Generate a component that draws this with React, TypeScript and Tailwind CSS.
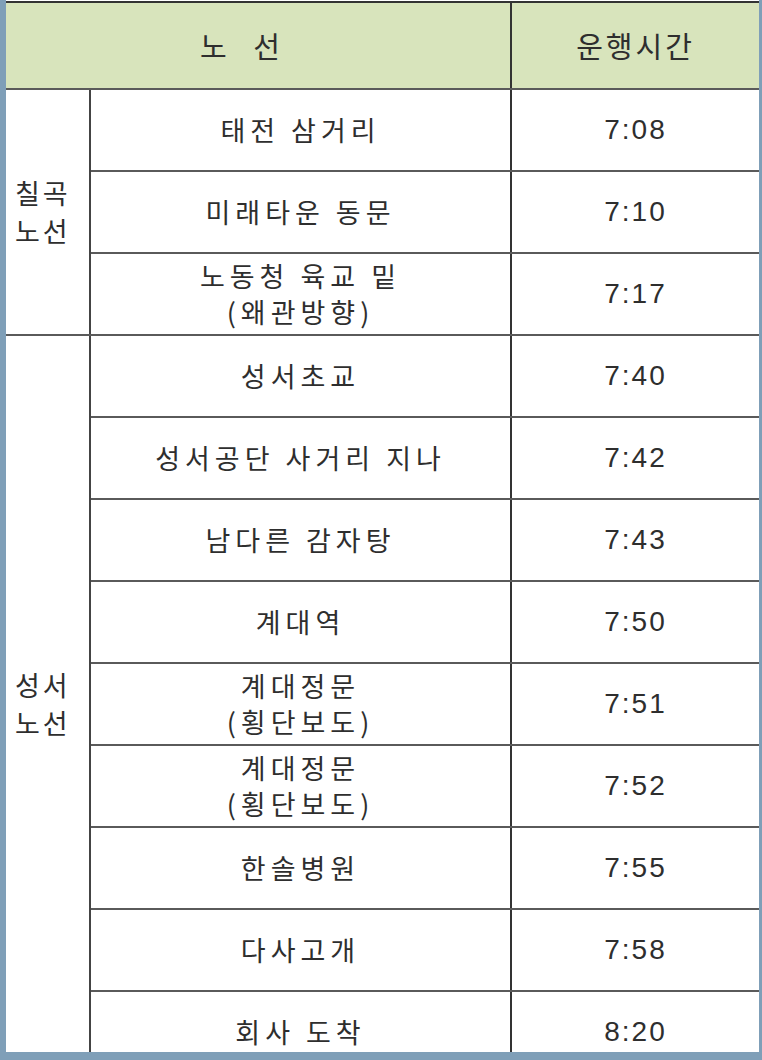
const ko = { fontFamily: '"Noto Sans CJK KR", "Noto Sans", sans-serif' };
const num = { fontFamily: '"Liberation Sans", Arial, sans-serif' };

type Stop = { name: string[]; time: string };

const chilgok: Stop[] = [
  { name: ["태전 삼거리"], time: "7:08" },
  { name: ["미래타운 동문"], time: "7:10" },
  { name: ["노동청 육교 밑", "(왜관방향)"], time: "7:17" },
];

const seongseo: Stop[] = [
  { name: ["성서초교"], time: "7:40" },
  { name: ["성서공단 사거리 지나"], time: "7:42" },
  { name: ["남다른 감자탕"], time: "7:43" },
  { name: ["계대역"], time: "7:50" },
  { name: ["계대정문", "(횡단보도)"], time: "7:51" },
  { name: ["계대정문", "(횡단보도)"], time: "7:52" },
  { name: ["한솔병원"], time: "7:55" },
  { name: ["다사고개"], time: "7:58" },
  { name: ["회사 도착"], time: "8:20" },
];

function Group({ label, stops }: { label: string[]; stops: Stop[] }) {
  return (
    <>
      {stops.map((s, i) => (
        <tr key={i} className="h-[82px]">
          {i === 0 && (
            <td
              rowSpan={stops.length}
              className="border-y-2 border-r-2 border-y-[#5a5a5a] border-r-[#444] pl-[9px] text-left align-middle text-[27px] leading-[38px] tracking-[3px] text-[#2e2e2e]"
              style={ko}
            >
              {label.map((l) => (
                <div key={l}>{l}</div>
              ))}
            </td>
          )}
          <td
            className="border-y-2 border-r-2 border-y-[#5a5a5a] border-r-[#333] text-center align-middle text-[27px] leading-[36px] tracking-[5px] text-[#2e2e2e]"
            style={ko}
          >
            {s.name.map((n, j) => (
              <div key={j}>{n}</div>
            ))}
          </td>
          <td
            className="border-y-2 border-y-[#5a5a5a] text-center align-middle text-[28px] tracking-[2px] text-[#2e2e2e]"
            style={num}
          >
            {s.time}
          </td>
        </tr>
      ))}
    </>
  );
}

export default function App() {
  return (
    <div className="h-[1060px] w-[762px] overflow-hidden bg-[#7f9fb8] pb-[8px] pl-[6px] pr-[3px]">
      <div className="h-full overflow-hidden bg-white pt-[1px]">
        <table className="w-full table-fixed border-collapse">
          <colgroup>
            <col className="w-[84px]" />
            <col className="w-[421px]" />
            <col />
          </colgroup>
          <thead>
            <tr className="h-[87px] bg-[#d8e4bc]">
              <th
                colSpan={2}
                className="border-t-2 border-r-2 border-b-2 border-t-[#333] border-r-[#333] border-b-[#5a5a5a] pr-[26px] text-center align-middle text-[29px] font-normal tracking-[10px] text-[#2e2e2e]"
                style={ko}
              >
                노 선
              </th>
              <th
                className="border-t-2 border-b-2 border-t-[#333] border-b-[#5a5a5a] text-center align-middle text-[29px] font-normal tracking-[3px] text-[#2e2e2e]"
                style={ko}
              >
                운행시간
              </th>
            </tr>
          </thead>
          <tbody>
            <Group label={["칠곡", "노선"]} stops={chilgok} />
            <Group label={["성서", "노선"]} stops={seongseo} />
          </tbody>
        </table>
      </div>
    </div>
  );
}
